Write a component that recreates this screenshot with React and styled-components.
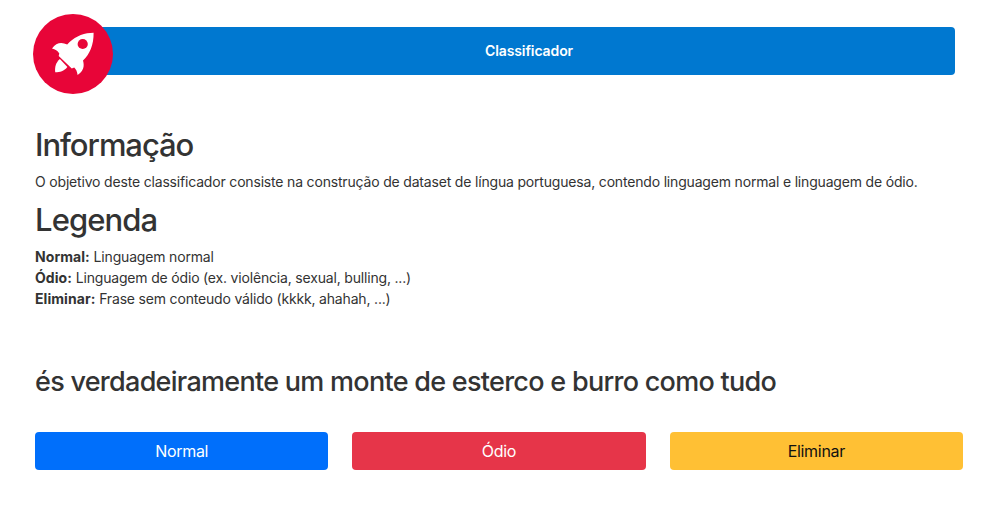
import React from "react";
import styled, { createGlobalStyle } from "styled-components";

const GlobalStyle = createGlobalStyle`
  *, *::before, *::after { box-sizing: border-box; }
  body {
    margin: 0;
    background: #fff;
    color: #333;
    font: 400 14px/21px Inter, "Liberation Sans", sans-serif;
    overflow: hidden;
  }
`;

const Page = styled.main`
  height: 505px;
  padding: 14px 35px 0;
`;

const Header = styled.header`
  display: flex;
  align-items: center;
  height: 80px;
  width: 922px;
  margin-left: -2px;
`;

const Logo = styled.svg`
  flex: none;
  width: 80px;
  height: 80px;
  z-index: 1;
`;

const TitleBar = styled.div`
  flex: 1;
  height: 48px;
  margin: -6px 0 0 -40px;
  padding-left: 30px;
  border-radius: 4px;
  background: #0078d0;
  color: #fff;
  text-align: center;
  font-weight: 600;
  line-height: 48px;
  letter-spacing: -0.1px;
`;

const Info = styled.section`
  margin-top: 32px;
`;

const Heading = styled.h2`
  margin: 0 0 7px;
  font-size: 31px;
  font-weight: 500;
  line-height: 38px;
  letter-spacing: ${(p) => p.$tracking};
`;

const Text = styled.p`
  margin: 0 0 9px;
  white-space: nowrap;
  letter-spacing: -0.18px;
`;

const Term = styled.strong`
  font-weight: 700;
  letter-spacing: 0.06px;
`;

const Phrase = styled.h3`
  margin: 56px 0 34px;
  font-size: 27px;
  font-weight: 500;
  line-height: 33px;
  white-space: nowrap;
  letter-spacing: -0.72px;
`;

const Actions = styled.div`
  display: grid;
  grid-template-columns: repeat(3, 1fr);
  gap: 24px;
  width: 928px;
`;

const Button = styled.button`
  height: 38px;
  padding: 0;
  border: 0;
  border-radius: 4px;
  background: ${(p) => p.$bg};
  color: ${(p) => p.$fg || "#fff"};
  font: 400 16px/38px Inter, "Liberation Sans", sans-serif;
  letter-spacing: -0.3px;
`;

export default function App() {
  return (
    <>
      <GlobalStyle />
      <Page>
        <Header>
          <Logo viewBox="33 14 80 80" aria-label="Foguete">
            <circle cx="73" cy="54" r="40" fill="#e80538" />
            <path
              fill="#fff"
              d="M93.6 32.8C85 32.8 76 36 69.6 42.1L67.2 44.4C61.5 41.6 56.2 42.5 52 48.4C55.3 49 57.5 50.6 59.3 53.4L58.7 56L71.8 68.4L74.2 67.4C76 69 77.2 71.6 77.6 74.9C83.4 71 84.7 66.8 83 60.5C89.8 54.3 93.8 44.5 93.6 32.8Z"
            />
            <path fill="#fff" d="M59.9 59C56 62.4 54.6 66.8 55.2 72.2C60 72.2 64 71 67.4 66.9Z" />
            <circle cx="82.7" cy="44" r="5.1" fill="#e80538" />
          </Logo>
          <TitleBar>Classificador</TitleBar>
        </Header>
        <Info>
          <Heading $tracking="-1.05px">Informação</Heading>
          <Text>
            O objetivo deste classificador consiste na construção de dataset de língua
            portuguesa, contendo linguagem normal e linguagem de ódio.
          </Text>
          <Heading $tracking="-0.9px">Legenda</Heading>
          <Text>
            <Term>Normal:</Term> Linguagem normal
            <br />
            <Term>Ódio:</Term> Linguagem de ódio (ex. violência, sexual, bulling, ...)
            <br />
            <Term>Eliminar:</Term> Frase sem conteudo válido (kkkk, ahahah, ...)
          </Text>
        </Info>
        <Phrase>és verdadeiramente um monte de esterco e burro como tudo</Phrase>
        <Actions>
          <Button $bg="#006ffb">Normal</Button>
          <Button $bg="#e63549">Ódio</Button>
          <Button $bg="#ffc034" $fg="#111">Eliminar</Button>
        </Actions>
      </Page>
    </>
  );
}
